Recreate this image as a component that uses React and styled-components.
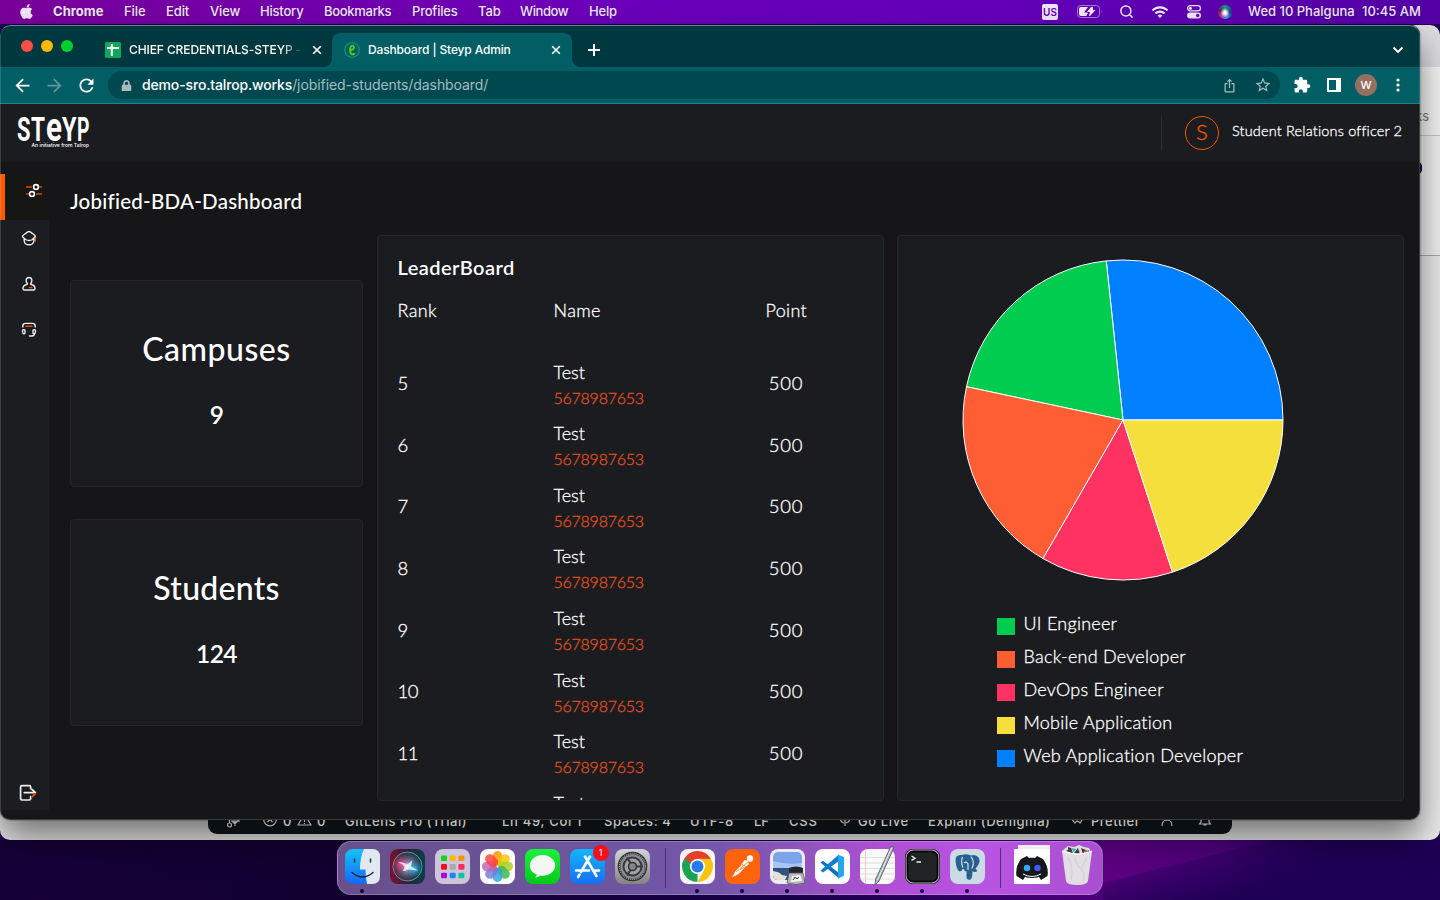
import React from "react";
import styled, { createGlobalStyle, css } from "styled-components";
import { FaApple, FaLock } from "react-icons/fa";
import { MdArrowBack, MdArrowForward, MdExtension, MdRefresh, MdStarBorder, MdIosShare, MdWifi } from "react-icons/md";
import { Search } from "lucide-react";

const ui = `Inter, "Liberation Sans", sans-serif`;
const app = `Lato, "Liberation Sans", sans-serif`;

const Global = createGlobalStyle`
  * { box-sizing: border-box; }
  body { margin: 0; overflow: hidden; }
  svg { display: block; flex: none; }
`;

/* ---------- desktop ---------- */
const Desktop = styled.div`
  position: relative;
  width: 1440px;
  height: 900px;
  overflow: hidden;
  font-family: ${ui};
  background:
    linear-gradient(165.6deg, transparent 0 29%, rgba(30, 0, 84, 0.35) 30%, #1e0054 62%) 1103px 840px / 337px 60px no-repeat,
    linear-gradient(90deg, #5e0082, #4c007a 35%, #260060 62%, #1c0050) 1103px 840px / 337px 60px no-repeat,
    linear-gradient(90deg, #160038 0, #120030 25%, #180048 55%, #2c0060 66%, #4a0078 75%) 0 840px / 1440px 60px no-repeat,
    #230052;
`;

const MenuBar = styled.header`
  display: flex;
  align-items: center;
  height: 24px;
  padding-bottom: 1px;
  color: #f0e6f8;
  font-size: 13px;
  font-weight: 500;
  line-height: 20px;
  white-space: nowrap;
  background: linear-gradient(90deg, #7a0099 0, #7200ac 20%, #6b00bc 45%, #6300b8 70%, #5400a6 100%);
  text-shadow: 0 1px 2px rgba(0, 0, 0, 0.25);
`;
const Cell = styled.div`
  width: ${(p) => p.$w}px;
  flex: none;
  display: flex;
  align-items: center;
  justify-content: ${(p) => (p.$center ? "center" : "flex-start")};
  font-weight: ${(p) => p.$weight || "inherit"};
  letter-spacing: ${(p) => p.$ls || 0}px;
  white-space: nowrap;
`;
const MenuText = styled(Cell)`
  padding-bottom: 1px;
`;
const Spacer = styled.div`
  flex: 1;
`;
const InputSource = styled.span`
  width: 16px;
  height: 16px;
  border-radius: 2px;
  background: #efe3fa;
  color: #6400b6;
  font-size: 10px;
  font-weight: 600;
  line-height: 17px;
  text-align: center;
  text-shadow: none;
`;
const SiriDot = styled.span`
  width: 14px;
  height: 14px;
  border-radius: 50%;
  background:
    radial-gradient(circle at 50% 55%, #fff 0 12%, rgba(255, 255, 255, 0) 45%),
    conic-gradient(#16a085, #1a3a8c 25%, #3aa0f0 45%, #d03080 62%, #5a2060 80%, #16a085);
`;

const MENUS = [
  ["Chrome", 71, 700, 0.05], ["File", 42, 500, -0.1], ["Edit", 44, 500, -0.1], ["View", 50, 500, -0.15],
  ["History", 64, 500, -0.2], ["Bookmarks", 88, 500, -0.3], ["Profiles", 66, 500, -0.2],
  ["Tab", 42, 500, -0.1], ["Window", 69, 500, -0.4], ["Help", 40, 500, -0.2],
];

function TopMenu() {
  return (
    <MenuBar>
      <Cell $w={53} $center><FaApple size={17} /></Cell>
      {MENUS.map(([t, w, wt, ls]) => <MenuText key={t} $w={w} $weight={wt} $ls={ls}>{t}</MenuText>)}
      <Spacer />
      <Cell $w={35}><InputSource>US</InputSource></Cell>
      <Cell $w={32}>
        <svg width="25" height="13" viewBox="0 0 25 13">
          <rect x=".5" y=".5" width="22" height="12" rx="3.2" fill="none" stroke="#a878d4" />
          <path d="M24 4.5q1 2 0 4z" fill="#a878d4" />
          <path d="M2 4q0-2 2-2h7L7 7.600h4L9.500 11H4q-2 0-2-2zM14 2h2v3h2.500L13 11h-1.200l1.200-4h-3z" fill="#f3e8fb" />
        </svg>
      </Cell>
      <Cell $w={34} $center><Search size={15} strokeWidth={2.400} /></Cell>
      <Cell $w={34} $center><MdWifi size={18} /></Cell>
      <Cell $w={34} $center>
        <svg width="14" height="14" viewBox="0 0 14 14">
          <rect x=".6" y=".6" width="12.800" height="5.200" rx="2.600" fill="none" stroke="#f0e6f8" strokeWidth="1.200" />
          <circle cx="3.400" cy="3.200" r="1.500" fill="#f0e6f8" />
          <rect y="7.500" width="14" height="6" rx="3" fill="#f0e6f8" />
          <circle cx="10.700" cy="10.500" r="1.700" fill="#6300b8" />
        </svg>
      </Cell>
      <Cell $w={37}><Cell $w={7} /><SiriDot /></Cell>
      <MenuText $w={114}>Wed 10 Phalguna</MenuText>
      <MenuText $w={78}>10:45 AM</MenuText>
    </MenuBar>
  );
}

/* ---------- windows behind ---------- */
const BackWindow = styled.div`
  position: absolute;
  left: 0;
  top: 120px;
  width: 1440px;
  height: 720px;
  border-radius: 10px;
  background: #ebebeb;
`;
const SideWindow = styled.div`
  position: absolute;
  left: 1300px;
  top: 25px;
  width: 140px;
  height: 231px;
  border-radius: 0 10px 0 0;
  background:
    radial-gradient(circle at 114px 143px, #2a0050 8px, transparent 8.5px),
    linear-gradient(#dcdce1 0 42px, #f5f5f5 42px 110px, #c8c8c8 110px 111px, #f1f1f1 111px);
  border-bottom: 1px solid #a9a9a9;
  overflow: hidden;
  color: #77777c;
  font-size: 13px;
  text-align: right;
  padding: 83px 11px 0 0;
`;
const StatusWindow = styled.div`
  position: absolute;
  left: 208px;
  top: 780px;
  width: 1024px;
  height: 54px;
  border-radius: 0 0 9px 9px;
  background: #0a0f14;
  display: flex;
  align-items: flex-end;
  padding: 0 0 3px 19px;
  color: #c2c0ba;
  font-size: 13px;
  font-weight: 500;
  line-height: 20px;
`;

function StatusBar() {
  const s = { fill: "none", stroke: "#a9a7a2", strokeWidth: 1.200 };
  return (
    <StatusWindow>
      <Cell $w={36}>
        <svg width="14" height="20" viewBox="0 0 14 20" {...s}><circle cx="2.500" cy="14" r="2" /><path d="M2.500 12V6M5 10l3 3 4-5M8 15v-5M4 10h9" /></svg>
      </Cell>
      <Cell $w={20}>
        <svg width="14" height="20" viewBox="0 0 14 20" {...s}><circle cx="7" cy="8.500" r="6.300" /><path d="m4.500 6 5 5M9.500 6l-5 5" /></svg>
      </Cell>
      <Cell $w={14}>0</Cell>
      <Cell $w={20}>
        <svg width="15" height="20" viewBox="0 0 15 20" {...s}><path d="M7.500 3 14 14H1zM7.500 7v4M7.500 12v1" /></svg>
      </Cell>
      <Cell $w={28}>0</Cell>
      <Cell $w={157} $ls={0.55}>GitLens Pro (Trial)</Cell>
      <Cell $w={102} $ls={0.7}>Ln 49, Col 1</Cell>
      <Cell $w={86} $ls={0.6}>Spaces: 4</Cell>
      <Cell $w={64} $ls={0.8}>UTF-8</Cell>
      <Cell $w={35}>LF</Cell>
      <Cell $w={49} $ls={0.8}>CSS</Cell>
      <Cell $w={20}>
        <svg width="14" height="20" viewBox="0 0 14 20" {...s}><path d="M2 6q0 5 4 6M12 6q0 5-4 6M4.500 6q0 3 2.500 3t2.500-3M7 9v6" /></svg>
      </Cell>
      <Cell $w={70} $ls={0.6}>Go Live</Cell>
      <Cell $w={142} $ls={0.55}>Explain (Denigma)</Cell>
      <Cell $w={21}>
        <svg width="14" height="20" viewBox="0 0 14 20" {...s}><path d="m1 7 4 5 3-4M6 8l4 4 4-6" /></svg>
      </Cell>
      <Cell $w={70} $ls={0.5}>Prettier</Cell>
      <Cell $w={37}>
        <svg width="14" height="20" viewBox="0 0 14 20" {...s}><circle cx="6" cy="6" r="3" /><path d="M1 15q0-6 5-6t5 6M9 8l4-3" /></svg>
      </Cell>
      <Cell $w={14}>
        <svg width="14" height="20" viewBox="0 0 14 20" {...s}><path d="M3 11V7q0-4 4-4t4 4v4l1.500 2h-11zM5.500 14h3" /></svg>
      </Cell>
    </StatusWindow>
  );
}

/* ---------- browser window ---------- */
const Browser = styled.section`
  position: absolute;
  left: 0;
  top: 25px;
  width: 1420px;
  height: 795px;
  display: flex;
  flex-direction: column;
  overflow: hidden;
  border-radius: 10px;
  background: #161618;
  color: #fff;
`;
const WindowShadow = styled.div`
  position: absolute;
  left: 0;
  top: 25px;
  width: 1420px;
  height: 795px;
  border-radius: 10px;
  box-shadow: 0 18px 34px rgba(0, 0, 0, 0.5), 0 0 2px rgba(0, 0, 0, 0.6);
`;
const WindowEdge = styled.div`
  position: absolute;
  inset: 0;
  border-radius: 10px;
  border: 1px solid rgba(190, 210, 215, 0.2);
  border-top-color: rgba(190, 220, 225, 0.5);
  pointer-events: none;
`;
const TabStrip = styled.div`
  display: flex;
  align-items: flex-end;
  height: 42px;
  flex: none;
  background: #003840;
  font-size: 12px;
  font-weight: 500;
`;
const Lights = styled.div`
  display: flex;
  align-items: center;
  gap: 8px;
  width: 93px;
  height: 42px;
  padding-left: 21px;
`;
const Light = styled.span`
  width: 12px;
  height: 12px;
  border-radius: 50%;
  background: ${(p) => p.$c};
`;
const Tab = styled.div`
  position: relative;
  display: flex;
  align-items: center;
  height: 34px;
  width: ${(p) => p.$w}px;
  padding-left: 12px;
  border-radius: 8px 8px 0 0;
  ${(p) => p.$active && css`
    background: #005e64;
    &::before, &::after {
      content: "";
      position: absolute;
      bottom: 0;
      width: 8px;
      height: 8px;
    }
    &::before { left: -8px; background: radial-gradient(circle at 0 0, transparent 7.5px, #005e64 8px); }
    &::after { right: -8px; background: radial-gradient(circle at 100% 0, transparent 7.5px, #005e64 8px); }
  `}
`;
const TabTitle = styled.span`
  width: ${(p) => p.$w}px;
  margin-left: 8px;
  padding-bottom: 1px;
  letter-spacing: ${(p) => p.$ls}px;
  white-space: nowrap;
  ${(p) => p.$fade && css`
    mask-image: linear-gradient(90deg, #000 88%, transparent 101%);
  `}
`;
const StripIcon = styled.div`
  display: flex;
  align-items: center;
  height: 34px;
  padding-left: ${(p) => p.$pad || 0}px;
`;
const Toolbar = styled.div`
  display: flex;
  align-items: center;
  height: 37px;
  flex: none;
  background: #005e64;
  border-bottom: 1px solid #16868d;
  padding-left: 6px;
`;
const Omnibox = styled.div`
  display: flex;
  align-items: center;
  width: 1172px;
  height: 28px;
  margin-left: 6px;
  border-radius: 14px;
  background: #00484f;
  padding-left: 11px;
  color: #a3bcc0;
`;
const Url = styled.div`
  margin-left: 9px;
  padding-bottom: 1px;
  font-size: 14px;
  letter-spacing: ${(p) => p.$ls}px;
  flex: 1;
  b { color: #fff; font-weight: 500; letter-spacing: -0.15px; }
`;
const Avatar = styled.span`
  width: 22px;
  height: 22px;
  border-radius: 50%;
  background: #966f63;
  font-size: 11px;
  font-weight: 500;
  line-height: 22px;
  text-align: center;
`;

const Cross = () => (
  <svg width="10" height="10" viewBox="0 0 10 10" stroke="#fff" strokeWidth="1.600"><path d="m1.200 1.200 7.600 7.600M8.800 1.200 1.200 8.800" /></svg>
);

function Chrome() {
  return (
    <>
      <TabStrip>
        <Lights><Light $c="#ff4f45" /><Light $c="#fdb900" /><Light $c="#00d02b" /></Lights>
        <Tab $w={239}>
          <svg width="16" height="16" viewBox="0 0 16 16"><rect width="16" height="16" rx="1.500" fill="#0fa85a" /><path d="M2 6h12M6.800 2v12" stroke="#fff" strokeWidth="2" /></svg>
          <TabTitle $w={173} $ls={-0.1} $fade>CHIEF CREDENTIALS-STEYP -</TabTitle>
          <StripIcon $pad={10}><Cross /></StripIcon>
        </Tab>
        <Tab $w={240} $active>
          <svg width="16" height="16" viewBox="0 0 16 16">
            <circle cx="8" cy="8" r="7.300" fill="#036058" stroke="#0b9a8c" strokeWidth="1.100" />
            <path d="M5 7.700h2.300c3.400-.2 3.300-4 1-4.100-2.700 0-3.200 8.900.2 8.900 1 0 1.700-.7 1.900-1.500" fill="none" stroke="#56c81c" strokeWidth="1.900" />
          </svg>
          <TabTitle $w={183} $ls={-0.14}>Dashboard | Steyp Admin</TabTitle>
          <Cross />
        </Tab>
        <StripIcon $pad={16}>
          <svg width="12" height="12" viewBox="0 0 12 12" stroke="#fff" strokeWidth="2"><path d="M6 0v12M0 6h12" /></svg>
        </StripIcon>
        <Spacer />
        <Cell $w={43}>
          <StripIcon $pad={15}>
            <svg width="12" height="8" viewBox="0 0 12 8" fill="none" stroke="#fff" strokeWidth="1.900"><path d="m1.500 1.500 4.500 4.500 4.500-4.500" /></svg>
          </StripIcon>
        </Cell>
      </TabStrip>
      <Toolbar>
        <Cell $w={32} $center><MdArrowBack size={21} /></Cell>
        <Cell $w={32} $center><MdArrowForward size={21} color="#5f979b" /></Cell>
        <Cell $w={32} $center><MdRefresh size={21} /></Cell>
        <Omnibox>
          <Cell $w={14} $center><FaLock size={11} color="#a9b9bc" /></Cell>
          <Url $ls={-0.08}><b>demo-sro.talrop.works</b>/jobified-students/dashboard/</Url>
          <Cell $w={32} $center><MdIosShare size={15} /></Cell>
          <Cell $w={35} $center><MdStarBorder size={18} /></Cell>
        </Omnibox>
        <Cell $w={6} />
        <Cell $w={32} $center><MdExtension size={18} /></Cell>
        <Cell $w={32} $center>
          <svg width="14" height="14" viewBox="0 0 14 14"><path fillRule="evenodd" d="M0 0h14v14H0zM2 2v10h7V2z" fill="#fff" /></svg>
        </Cell>
        <Cell $w={32} $center><Avatar>W</Avatar></Cell>
        <Cell $w={32} $center>
          <svg width="4" height="14" viewBox="0 0 4 14" fill="#fff"><circle cx="2" cy="2" r="1.600" /><circle cx="2" cy="7" r="1.600" /><circle cx="2" cy="12" r="1.600" /></svg>
        </Cell>
      </Toolbar>
    </>
  );
}

/* ---------- dashboard ---------- */
const book = css`
  font-weight: 300;
  -webkit-text-stroke: 0.3px currentColor;
`;
const AppHeader = styled.div`
  display: flex;
  align-items: center;
  justify-content: space-between;
  height: 58px;
  flex: none;
  padding: 0 18px 0 17px;
  background: #1b1c20;
  font-family: ${app};
`;
const User = styled.div`
  display: flex;
  align-items: center;
  height: 34px;
  border-left: 1px solid #2b2c30;
  padding-left: 23px;
  gap: 13px;
`;
const Initial = styled.span`
  width: 34px;
  height: 34px;
  border: 1px solid #f65500;
  border-radius: 50%;
  color: #f65500;
  font-size: 22px;
  line-height: 30px;
  text-align: center;
  ${book}
`;
const UserName = styled.span`
  width: 170px;
  padding-bottom: 6px;
  font-size: 14.500px;
  letter-spacing: 0.17px;
  white-space: nowrap;
  ${book}
`;
const Body = styled.div`
  display: flex;
  flex: 1;
  min-height: 0;
`;
const Sidebar = styled.nav`
  display: flex;
  flex-direction: column;
  width: 49px;
  height: 648px;
  padding-top: 12px;
  background: linear-gradient(#161618 0 12px, #1b1d20 12px);
`;
const NavItem = styled.div`
  display: flex;
  justify-content: center;
  height: 46px;
  padding: ${(p) => p.$pad || "9px 0 0 9px"};
  ${(p) => p.$active && css`
    background: #161615;
    border-left: 5px solid #ff5a00;
  `}
`;
const Content = styled.main`
  display: flex;
  flex-direction: column;
  flex: 1;
  padding: 25px 16px 0 21px;
  font-family: ${app};
`;
const PageTitle = styled.h1`
  margin: 0 0 20px;
  font-size: 20.500px;
  font-weight: 500;
  line-height: 28px;
  letter-spacing: 0.25px;
`;
const Panels = styled.div`
  display: grid;
  grid-template-columns: 293px 507px 507px;
  column-gap: 13.500px;
  height: 566px;
`;
const Stats = styled.div`
  display: flex;
  flex-direction: column;
  gap: 32px;
  padding-top: 45px;
`;
const Card = styled.section`
  border: 1px solid #26272b;
  border-radius: 4px;
  background: #1b1c20;
  overflow: hidden;
`;
const StatCard = styled(Card)`
  height: 207px;
  padding-top: 48px;
  text-align: center;
  font-weight: 500;
`;
const StatName = styled.div`
  font-size: 32px;
  line-height: 40px;
  letter-spacing: ${(p) => p.$ls}px;
`;
const StatValue = styled.div`
  margin-top: 30px;
  font-size: 24.500px;
  font-weight: 600;
  line-height: 32px;
  letter-spacing: -0.5px;
`;
const Board = styled(Card)`
  padding: 17px 20px 0;
  font-size: 18px;
`;
const BoardTitle = styled.h2`
  margin: 0 0 14px;
  font-size: 20px;
  font-weight: 600;
  line-height: 28px;
  letter-spacing: 0.45px;
`;
const BoardGrid = styled.div`
  display: grid;
  grid-template-columns: 156px 212px 41px;
  align-items: center;
  ${book}
`;
const BoardHead = styled(BoardGrid)`
  height: 30px;
  margin-bottom: 28.500px;
  letter-spacing: 0.35px;
`;
const BoardRow = styled(BoardGrid)`
  height: 61.600px;
  line-height: 26px;
`;
const Rank = styled.span`
  padding-bottom: 2px;
  font-size: 18.500px;
  letter-spacing: -0.6px;
`;
const Points = styled(Rank)`
  text-align: center;
  letter-spacing: 0.8px;
  white-space: nowrap;
`;
const Person = styled.div`
  padding-top: 0.500px;
`;
const Phone = styled.div`
  color: #e04e1d;
  font-size: 16px;
  letter-spacing: -0.25px;
`;
const ChartCard = styled(Card)`
  padding-top: 23px;
`;
const Pie = styled.svg`
  margin: 0 0 29px 64px;
`;
const LegendItem = styled.div`
  display: flex;
  align-items: center;
  height: 33px;
  padding-left: 99px;
  gap: 8.500px;
  font-size: 18px;
  ${book}
`;
const Swatch = styled.span`
  width: 18px;
  height: 17px;
  background: ${(p) => p.$c};
`;
const LegendLabel = styled.span`
  padding-bottom: 8px;
  letter-spacing: 0.25px;
`;

const LogoText = styled.svg`
  overflow: visible;
  margin-bottom: 5px;
  fill: #fff;
  font-family: "Liberation Sans Narrow", Roboto, sans-serif;
  font-weight: 700;
`;
const Logo = () => (
  <LogoText width="74" height="34" viewBox="0 0 74 34">
    <text y="27" fontSize="33" textLength="13.500" lengthAdjust="spacingAndGlyphs">S</text>
    <text x="14" y="27" fontSize="33" textLength="14" lengthAdjust="spacingAndGlyphs">T</text>
    <text x="29" y="27" fontSize="41" textLength="16" lengthAdjust="spacingAndGlyphs">e</text>
    <text x="45" y="27" fontSize="33" textLength="14.500" lengthAdjust="spacingAndGlyphs">Y</text>
    <text x="60" y="27" fontSize="33" textLength="12.500" lengthAdjust="spacingAndGlyphs">P</text>
    <text x="14.500" y="33" fontSize="5" fontWeight="500" fontFamily="Inter" textLength="57.500" lengthAdjust="spacingAndGlyphs">An initiative from Talrop</text>
  </LogoText>
);

const SLICES = [
  ["#0080ff", 0, 96], ["#00cc4f", 96, 168], ["#ff5e35", 168, 240], ["#ff3262", 240, 288], ["#f5df3d", 288, 360],
];
const at = (deg) => {
  const a = (deg * Math.PI) / 180;
  return `${161 + 160 * Math.cos(a)} ${161 - 160 * Math.sin(a)}`;
};

const LEGEND = [
  ["UI Engineer", "#00cc4f"], ["Back-end Developer", "#ff5e35"], ["DevOps Engineer", "#ff3262"],
  ["Mobile Application", "#f5df3d"], ["Web Application Developer", "#0080ff"],
];
const RANKS = [5, 6, 7, 8, 9, 10, 11, 12];

function Dashboard() {
  const line = { fill: "none", stroke: "#eee", strokeWidth: 1.400, strokeLinejoin: "round", strokeLinecap: "round" };
  return (
    <>
      <AppHeader>
        <Logo />
        <User><Initial>S</Initial><UserName>Student Relations officer 2</UserName></User>
      </AppHeader>
      <Body>
        <Sidebar>
          <NavItem $active $pad="9px 0 0 14px">
            <svg width="16" height="15" viewBox="0 0 16 15" fill="none">
              <path d="M0 4h6M13 4h3M0 11h3M10 11h6" stroke="#d44900" strokeWidth="1.700" />
              <circle cx="10" cy="4" r="2.400" stroke="#fff" strokeWidth="1.600" /><circle cx="6" cy="11" r="2.400" stroke="#fff" strokeWidth="1.600" />
            </svg>
          </NavItem>
          <NavItem $pad="10px 0 0 9px">
            <svg width="16" height="16" viewBox="0 0 16 16" {...line}>
              <path d="M14.300 7v3.800" stroke="#e04e00" strokeWidth="1.700" />
              <path d="M1.500 6.300Q1.500 5.600 2.500 5L6.800 1.900Q8 1.100 9.200 1.900L13.500 5Q14.500 5.600 14 6.800L11.500 9.500Q8 11.600 4.500 9.500L2 7.200zM3.200 8.800V11Q3.700 14.800 8 14.800T12.800 11V8.800" />
            </svg>
          </NavItem>
          <NavItem $pad="10px 0 0 9px">
            <svg width="16" height="16" viewBox="0 0 16 16" {...line}>
              <path d="M8 1.500c3.600 0 3.400 4.500 1.700 5.900v.8c3 .6 4.300 2.700 4.300 4.200 0 1.300-.6 1.600-1.500 1.600h-9c-.9 0-1.500-.3-1.500-1.600 0-1.500 1.300-3.600 4.300-4.200v-.8C4.600 6 4.400 1.500 8 1.500z" />
              <path d="M8.500 11.500H11" stroke="#e04e00" strokeWidth="1.500" />
            </svg>
          </NavItem>
          <NavItem $pad="10px 0 0 9px">
            <svg width="16" height="16" viewBox="0 0 16 16" {...line}>
              <path d="M1.800 5V4q0-2.600 2.700-2.600h7Q14.200 1.400 14.200 4v1M2 7.800q2-.3 2 1v1.700q0 1.500-1.200 1.300-1.300-.3-1.300-2V9q0-1 .5-1.200zM14 7.800q-2-.3-2 1v1.700q0 1.500 1.200 1.300 1.300-.3 1.300-2V9q0-1-.5-1.200zM13.500 12q-.5 2-2.500 2H8.500" />
              <path d="M5 4.200h6" stroke="#e04e00" strokeWidth="1.500" />
            </svg>
          </NavItem>
          <Spacer />
          <NavItem $pad="20px 0 0 7px">
            <svg width="18" height="18" viewBox="0 0 17 17" {...line} strokeWidth="1.600">
              <path d="M11 4.500V2.800q0-1.300-1.300-1.300H2.800Q1.500 1.500 1.500 2.800v11q0 1.300 1.300 1.300h6.900q1.300 0 1.300-1.300v-1.800M5 8.200h10.500L12.200 5" />
              <path d="m15.300 9.200-3 3" stroke="#e04e00" strokeWidth="1.800" />
            </svg>
          </NavItem>
        </Sidebar>
        <Content>
          <PageTitle>Jobified-BDA-Dashboard</PageTitle>
          <Panels>
            <Stats>
              <StatCard><StatName $ls={0.5}>Campuses</StatName><StatValue>9</StatValue></StatCard>
              <StatCard><StatName $ls={0.25}>Students</StatName><StatValue>124</StatValue></StatCard>
            </Stats>
            <Board>
              <BoardTitle>LeaderBoard</BoardTitle>
              <BoardHead><span>Rank</span><span>Name</span><span>Point</span></BoardHead>
              {RANKS.map((r) => (
                <BoardRow key={r}>
                  <Rank>{r}</Rank>
                  <Person>Test<Phone>5678987653</Phone></Person>
                  <Points>500</Points>
                </BoardRow>
              ))}
            </Board>
            <ChartCard>
              <Pie width="322" height="322" viewBox="0 0 322 322">
                {SLICES.map(([c, a, b]) => (
                  <path key={c} d={`M161 161L${at(a)}A160 160 0 0 0 ${at(b)}Z`} fill={c} stroke="#fff" strokeWidth="1" />
                ))}
              </Pie>
              {LEGEND.map(([t, c]) => (
                <LegendItem key={t}><Swatch $c={c} /><LegendLabel>{t}</LegendLabel></LegendItem>
              ))}
            </ChartCard>
          </Panels>
        </Content>
      </Body>
    </>
  );
}

/* ---------- dock ---------- */
const DockBar = styled.footer`
  position: absolute;
  left: 337px;
  top: 841px;
  width: 766px;
  height: 54px;
  display: flex;
  padding: 0 1.500px;
  border: 1px solid rgba(255, 255, 255, 0.22);
  border-radius: 14px;
  background: linear-gradient(90deg, #68508c 0, #6c559a 30%, #7556ac 50%, #8d54bb 60%, #b14fd6 72%, #b854e2 85%, #a94fd0 100%);
`;
const DockItem = styled.div`
  position: relative;
  width: 45px;
  display: flex;
  justify-content: center;
  padding-top: 7px;
  ${(p) => p.$running && css`
    &::after {
      content: "";
      position: absolute;
      left: 20.500px;
      top: 47px;
      width: 4px;
      height: 4px;
      border-radius: 50%;
      background: #16022c;
    }
  `}
`;
const DockDivider = styled.div`
  width: 1px;
  height: 40px;
  margin: 6px 9px 0 10px;
  background: #49307a;
`;
const Badge = styled.span`
  position: absolute;
  right: 1px;
  top: 3px;
  width: 16px;
  height: 16px;
  border-radius: 50%;
  background: #f5101c;
  color: #fff;
  font-size: 9px;
  line-height: 16px;
  text-align: center;
`;

const Tile = ({ fill, children }) => (
  <svg width="35" height="36" viewBox="0 0 35 36" overflow="visible">
    <rect width="35" height="35" rx="8" fill={fill} />
    {children}
  </svg>
);

const Finder = () => (
  <Tile fill="url(#finderBlue)">
    <defs><linearGradient id="finderBlue" x2="0" y2="1"><stop stopColor="#12c4ff" /><stop offset="1" stopColor="#1767f5" /></linearGradient></defs>
    <path d="M19 0h8q8 0 8 8v19q0 8-8 8h-5q-1.500-7-1.500-14.500H15Q15 8 19 0z" fill="#e3e7f0" />
    <path d="M9.500 10v3M25.500 10v3" stroke="#143" strokeWidth="1.600" strokeLinecap="round" />
    <path d="M7 23.500q10.500 9 21 0" fill="none" stroke="#123" strokeWidth="1.400" strokeLinecap="round" />
  </Tile>
);
const Siri = () => (
  <Tile fill="url(#siriBack)">
    <defs>
      <linearGradient id="siriBack"><stop stopColor="#7c1030" /><stop offset=".5" stopColor="#2b2238" /><stop offset="1" stopColor="#073f47" /></linearGradient>
      <radialGradient id="siriGlow"><stop stopColor="#fff" /><stop offset=".3" stopColor="#c3cdf5" stopOpacity=".6" /><stop offset="1" stopColor="#3f6f90" stopOpacity=".15" /></radialGradient>
      <radialGradient id="siriPink"><stop stopColor="#ff4f9a" stopOpacity=".8" /><stop offset="1" stopColor="#d01a60" stopOpacity="0" /></radialGradient>
      <radialGradient id="siriCyan"><stop stopColor="#35c8ff" stopOpacity=".9" /><stop offset="1" stopColor="#0a76b8" stopOpacity="0" /></radialGradient>
    </defs>
    <circle cx="17.500" cy="17.500" r="14.500" fill="url(#siriGlow)" stroke="#5fa5a8" strokeWidth=".9" />
    <ellipse cx="10.500" cy="15" rx="8" ry="9" fill="url(#siriPink)" />
    <ellipse cx="24" cy="20" rx="9" ry="8" fill="url(#siriCyan)" />
    <path d="M8 13q6 0 9.500 2.500 2.500-2 5-4.500-1 4-1.500 6.500 4 2 7 4-6-.5-9.500-1-3 1.500-6 1.500 2-2.500 2-4.500Q12 14.500 8 13z" fill="#fff" opacity=".75" />
  </Tile>
);
const Launchpad = () => (
  <Tile fill="#cdc5da">
    {["#11d61a", "#ffb900", "#ff9200", "#f30b23", "#a9aaae", "#fb2b60", "#a70be1", "#148cff", "#0cc5a7"].map((c, i) => (
      <rect key={c} x={6 + (i % 3) * 8.700} y={6.500 + Math.floor(i / 3) * 8.600} width="6" height="5.600" rx="1.200" fill={c} />
    ))}
  </Tile>
);
const Photos = () => (
  <Tile fill="#fff">
    {["#ff9500", "#f4c900", "#a6d321", "#41b649", "#2ca6dc", "#7777dc", "#bd64b2", "#ff413b"].map((c, i) => (
      <rect key={c} x="12.700" y="2" width="9.600" height="14.500" rx="4.800" fill={c} opacity=".83" transform={`rotate(${i * 45} 17.500 17.500)`} />
    ))}
  </Tile>
);
const Messages = () => (
  <Tile fill="url(#msg)">
    <defs><linearGradient id="msg" x2="0" y2="1"><stop stopColor="#1bf13d" /><stop offset="1" stopColor="#03c819" /></linearGradient></defs>
    <ellipse cx="17.500" cy="16.500" rx="12.700" ry="10.400" fill="#f2f8f1" />
    <path d="M12 24q0 3.500-2.500 4.500 5 0 6.500-3z" fill="#e3f1e1" />
  </Tile>
);
const AppStore = () => (
  <Tile fill="url(#store)">
    <defs><linearGradient id="store" x2="0" y2="1"><stop stopColor="#14b6ff" /><stop offset="1" stopColor="#176ef4" /></linearGradient></defs>
    <path d="m15 7.500 11.500 19.500M20 7.500 11 23M6 21.500h13M24 21.500h5M9.500 25.500l-1.500 2.500" stroke="#fff" strokeWidth="2.600" strokeLinecap="round" />
  </Tile>
);
const Settings = () => (
  <Tile fill="url(#sett)">
    <defs><linearGradient id="sett" x2="0" y2="1"><stop stopColor="#d0d4d9" /><stop offset="1" stopColor="#85837f" /></linearGradient></defs>
    <circle cx="17.500" cy="17.500" r="13.500" fill="#8b8c8e" stroke="#303236" strokeWidth="2.600" />
    <circle cx="17.500" cy="17.500" r="13" fill="none" stroke="#a9a9a9" strokeWidth="1.200" strokeDasharray="1 1" />
    <circle cx="17.500" cy="17.500" r="9" fill="#9fa1a3" stroke="#36383c" strokeWidth="2" />
    <circle cx="17.500" cy="17.500" r="4" fill="#85868a" stroke="#333" strokeWidth="1.600" />
    <path d="M21.500 17.500h6.500M15.500 14 12 8.500M15.500 21 12 26.500" stroke="#3a3c40" strokeWidth="2.200" />
  </Tile>
);
const ChromeIcon = () => (
  <Tile fill="#f6f5f7">
    <path d="M17.500 17.500 4.200 9.800A15.300 15.300 0 0 1 30.800 9.800z" fill="#ea3c2c" />
    <path d="M17.500 17.500 4.200 9.800a15.300 15.300 0 0 0 13.300 23z" fill="#1ba253" />
    <path d="M17.500 17.500V9.800h13.300a15.300 15.300 0 0 1-13.300 23l6.600-11.500z" fill="#fcc210" />
    <path d="M4.200 9.800 11 21.200l6.500-11.400z" fill="#1ba253" />
    <path d="M4.200 9.800h26.600V10H17.500L11 14z" fill="#ea3c2c" />
    <circle cx="17.500" cy="17.500" r="7.600" fill="#fff" /><circle cx="17.500" cy="17.500" r="6" fill="#2877eb" />
  </Tile>
);
const Postman = () => (
  <Tile fill="#ff640d">
    <circle cx="25" cy="9.500" r="3.200" fill="#fff" />
    <path d="m19.500 11 3 .5 1.500 3.500-4 3.500L13.500 25 7 28.500 10.500 22l5-5z" fill="#fff" />
    <path d="m23 13-12 10M17 15.500l4 2-6 3" fill="none" stroke="#ff8d4f" strokeWidth="1" />
  </Tile>
);
const Preview = () => (
  <Tile fill="#ececf0">
    <rect x="3" y="3" width="29" height="28" rx="5" fill="#7da3ea" />
    <path d="M3 12q14 4 29 2v5H3z" fill="#a9c5f2" />
    <path d="M3 19h29v12H8q-5 0-5-5z" fill="#2d537f" />
    <path d="M3 22q7 1 9 4l5 1-2 4H8q-5 0-5-5z" fill="#e6e0d6" />
    <path d="M19 19q7-3 14 0v5q-7 2-14 0z" fill="#24252a" />
    <path d="M19 24h14l2 10q-9 3-18 0z" fill="#b8b9bb" stroke="#55565b" strokeWidth=".8" />
    <path d="m22 27 8-1 2 6-11 1z" fill="#f5f5f4" /><path d="m23 31 2-3 2 2 2-2" fill="none" stroke="#333" />
  </Tile>
);
const VSCode = () => (
  <Tile fill="#fff">
    <path d="M5.500 13.500 8 11.800 24 24v5.500z" fill="#0d6fbd" />
    <path d="M5.500 21.500 8 23.500 24 12V5.500z" fill="#0a80cf" />
    <path d="m23 5.500 6 2.800v18.400l-6 3z" fill="#29a5ef" />
  </Tile>
);
const TextEdit = () => (
  <Tile fill="#fafafa">
    <path d="M0 8.500h35M0 14h35M0 19.500h35M0 25h35M0 30h35" stroke="#d5d5d8" strokeWidth=".8" />
    <path d="M5.500 0v35" stroke="#f1b8b8" strokeWidth=".8" />
    <path d="m31-3 3 1.500L19 32l-4 4 .5-5.500z" fill="#a7b2bb" stroke="#4b555e" strokeWidth=".8" />
    <path d="m31.500-1-14 32" stroke="#e6edf2" strokeWidth="1" />
  </Tile>
);
const Terminal = () => (
  <Tile fill="#070707">
    <rect x="1.200" y="1.200" width="32.600" height="32.600" rx="7" fill="#202122" stroke="#a9a7ad" strokeWidth="1.200" />
    <rect x="2.500" y="2.500" width="30" height="30" rx="6" fill="#212223" stroke="#000" strokeWidth="1.500" />
    <path d="m6.500 7 3.500 2.200-3.500 2.200M11.500 13h4.500" fill="none" stroke="#f1f1f1" strokeWidth="1.300" />
  </Tile>
);
const Postgres = () => (
  <Tile fill="#cbdbe6">
    <path d="M12 6Q5 5 5.500 12q1 9 4 10.500 2 0 3.500-3 2 3 3.500 3V29q1 2.500 4 1.500 2-1 2-8.500 2 2 5 0l-2-2.500Q31 14 29 9q-3-4-8-2.500Q16 4.500 12 6z" fill="#28618f" />
    <path d="M12.500 8q-2 5 .5 10.500M21 7.500q4 5 1 12M14 14q3-2 4 1v6" fill="none" stroke="#d5e4ef" strokeWidth="1.200" />
  </Tile>
);
const DiscordFile = () => (
  <svg width="37" height="40" viewBox="0 0 37 40">
    <path d="M4 0h32v8H4z" fill="#eee" />
    <rect y="4" width="36" height="35" fill="#fff" />
    <path d="m7 14 6-3 2 2q3-.5 6 0l2-2 6 3q6 8 4.500 17l-6.500 4-2-3q-7 2-14 0l-2 3-6.500-4Q1 22 7 14z" fill="#15171a" />
    <path d="M9 29q9 5 18 0" fill="none" stroke="#fff" strokeWidth="1" />
    <circle cx="13" cy="23" r="3.200" fill="#35aaf4" /><circle cx="23.500" cy="23" r="3.200" fill="#4556ff" />
  </svg>
);
const Trash = () => (
  <svg width="32" height="40" viewBox="0 0 32 40">
    <path d="m2 5 5-4 6 1 5-2 5 2 5 1 2 4-5 4H5z" fill="#ddd" />
    <path d="m5 6 5-3 2 5zM20 3l5 2-3 4zM13 8l4-5 2 6zM7 2l3 1-3 2zM25 8l3-3v3z" fill="#3b3d42" /><path d="m10 3 5 1-2 3z" fill="#22b8aa" /><path d="m22 6 5-1-2 3z" fill="#b65c40" />
    <path d="M1 6q15 6 30 0l-4 30q-1 4-11 4T5 36z" fill="#e1dfe3" />
    <path d="M1 6q15 6 30 0" fill="none" stroke="#fff" strokeWidth="1.200" />
    <path d="M7 13q6 6 3 22M14 12q1 8 6 12t2 12M26 12l-6 12" fill="none" stroke="#d3d0d7" strokeWidth="1.200" />
  </svg>
);
const Raised = styled.div`
  margin-top: -4px;
`;

function Dock() {
  return (
    <DockBar>
      <DockItem $running><Finder /></DockItem>
      <DockItem><Siri /></DockItem>
      <DockItem><Launchpad /></DockItem>
      <DockItem><Photos /></DockItem>
      <DockItem><Messages /></DockItem>
      <DockItem><AppStore /><Badge>1</Badge></DockItem>
      <DockItem><Settings /></DockItem>
      <DockDivider />
      <DockItem $running><ChromeIcon /></DockItem>
      <DockItem $running><Postman /></DockItem>
      <DockItem $running><Preview /></DockItem>
      <DockItem $running><VSCode /></DockItem>
      <DockItem $running><TextEdit /></DockItem>
      <DockItem $running><Terminal /></DockItem>
      <DockItem $running><Postgres /></DockItem>
      <DockDivider />
      <DockItem><Raised><DiscordFile /></Raised></DockItem>
      <DockItem><Raised><Trash /></Raised></DockItem>
    </DockBar>
  );
}

export default function App() {
  return (
    <Desktop>
      <Global />
      <TopMenu />
      <BackWindow />
      <SideWindow>ks</SideWindow>
      <WindowShadow />
      <StatusBar />
      <Browser>
        <Chrome />
        <Dashboard />
        <WindowEdge />
      </Browser>
      <Dock />
    </Desktop>
  );
}
